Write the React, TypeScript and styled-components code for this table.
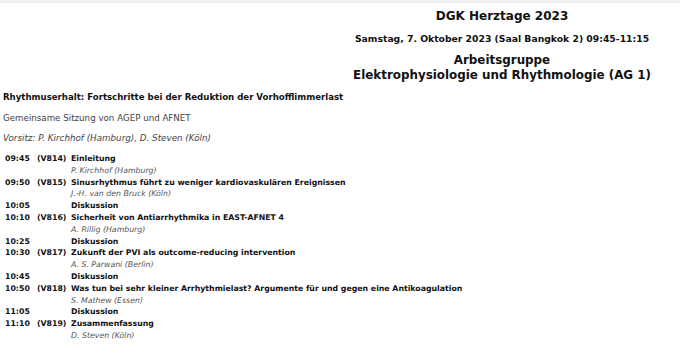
import styled, { createGlobalStyle } from "styled-components";

const GlobalStyle = createGlobalStyle`
  html, body {
    margin: 0;
    padding: 0;
    background: #fff;
  }
  body {
    font-family: "DejaVu Sans", Verdana, sans-serif;
    color: #111;
  }
`;

const Page = styled.div`
  width: 680px;
  height: 355px;
  overflow: hidden;
  border-top: 3px solid #efefef;
  box-sizing: border-box;
`;

const Header = styled.div`
  padding-left: 324px;
  text-align: center;
  font-weight: bold;
`;

const Title = styled.div`
  font-size: 12px;
  line-height: 16px;
  margin-top: 4.5px;
`;

const DateLine = styled.div`
  font-size: 9.25px;
  line-height: 12px;
  margin-top: 9px;
`;

const Group = styled.div`
  font-size: 11.9px;
  line-height: 15px;
  margin-top: 8px;
`;

const Intro = styled.div`
  padding-left: 3px;
  margin-top: 8.5px;
`;

const Topic = styled.div`
  font-size: 8.6px;
  font-weight: bold;
  line-height: 12px;
`;

const Joint = styled.div`
  font-size: 8.7px;
  color: #444;
  line-height: 12px;
  margin-top: 9px;
`;

const Chair = styled(Joint)`
  font-size: 8.75px;
  font-style: italic;
  margin-top: 8px;
`;

const Schedule = styled.div`
  margin-top: 9px;
  padding-left: 5px;
  display: flex;
  flex-direction: column;
`;

const Item = styled.div`
  display: grid;
  grid-template-columns: 32px 34px 1fr;
  font-size: 7.8px;
  line-height: 11.8px;
`;

const Cell = styled.span`
  font-weight: bold;
  white-space: nowrap;
`;

const Speaker = styled.span`
  grid-column: 3;
  font-style: italic;
  color: #555;
  white-space: nowrap;
`;

type Session = {
  time: string;
  code?: string;
  title: string;
  speaker?: string;
};

const sessions: Session[] = [
  { time: "09:45", code: "(V814)", title: "Einleitung", speaker: "P. Kirchhof (Hamburg)" },
  {
    time: "09:50",
    code: "(V815)",
    title: "Sinusrhythmus führt zu weniger kardiovaskulären Ereignissen",
    speaker: "J.-H. van den Bruck (Köln)",
  },
  { time: "10:05", title: "Diskussion" },
  {
    time: "10:10",
    code: "(V816)",
    title: "Sicherheit von Antiarrhythmika in EAST-AFNET 4",
    speaker: "A. Rillig (Hamburg)",
  },
  { time: "10:25", title: "Diskussion" },
  {
    time: "10:30",
    code: "(V817)",
    title: "Zukunft der PVI als outcome-reducing intervention",
    speaker: "A. S. Parwani (Berlin)",
  },
  { time: "10:45", title: "Diskussion" },
  {
    time: "10:50",
    code: "(V818)",
    title: "Was tun bei sehr kleiner Arrhythmielast? Argumente für und gegen eine Antikoagulation",
    speaker: "S. Mathew (Essen)",
  },
  { time: "11:05", title: "Diskussion" },
  { time: "11:10", code: "(V819)", title: "Zusammenfassung", speaker: "D. Steven (Köln)" },
];

export default function App() {
  return (
    <>
      <GlobalStyle />
      <Page>
        <Header>
          <Title>DGK Herztage 2023</Title>
          <DateLine>Samstag, 7. Oktober 2023 (Saal Bangkok 2) 09:45-11:15</DateLine>
          <Group>
            Arbeitsgruppe
            <br />
            Elektrophysiologie und Rhythmologie (AG 1)
          </Group>
        </Header>
        <Intro>
          <Topic>Rhythmuserhalt: Fortschritte bei der Reduktion der Vorhofflimmerlast</Topic>
          <Joint>Gemeinsame Sitzung von AGEP und AFNET</Joint>
          <Chair>Vorsitz: P. Kirchhof (Hamburg), D. Steven (Köln)</Chair>
        </Intro>
        <Schedule>
          {sessions.map((s) => (
            <Item key={s.time}>
              <Cell>{s.time}</Cell>
              <Cell>{s.code ?? ""}</Cell>
              <Cell>{s.title}</Cell>
              {s.speaker && <Speaker>{s.speaker}</Speaker>}
            </Item>
          ))}
        </Schedule>
      </Page>
    </>
  );
}
